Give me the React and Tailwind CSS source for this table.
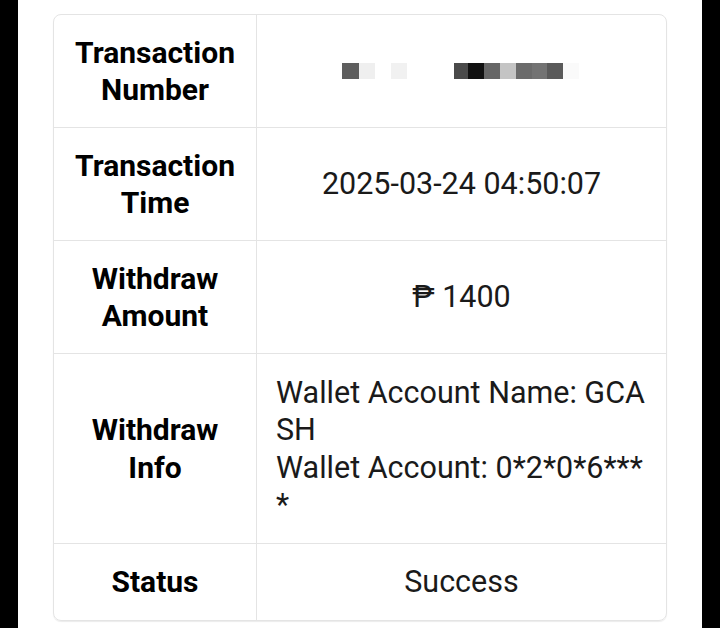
const mask = [
  { w: 17, c: "bg-[#5e5e5e]" },
  { w: 16, c: "bg-[#efefef]" },
  { w: 16, c: "bg-white" },
  { w: 16, c: "bg-[#f1f1f1]" },
  { w: 47, c: "bg-white" },
  { w: 14, c: "bg-[#4a4a4a]" },
  { w: 16, c: "bg-[#111111]" },
  { w: 16, c: "bg-[#666666]" },
  { w: 16, c: "bg-[#c4c4c4]" },
  { w: 16, c: "bg-[#6b6b6b]" },
  { w: 15, c: "bg-[#737373]" },
  { w: 16, c: "bg-[#5a5a5a]" },
  { w: 16, c: "bg-[#fafafa]" },
];

const Label = ({ children }) => (
  <div className="flex items-center justify-center border-r border-[#e4e4e4] px-2 py-[18.5px] text-center text-[30px] font-bold leading-[37.5px] text-black">
    <span>{children}</span>
  </div>
);

const Value = ({ children, className = "px-[16px] justify-center py-[18.5px]" }) => (
  <div className={`flex items-center text-[30.5px] leading-[37.5px] text-[#1a1a1a] ${className}`}>
    {children}
  </div>
);

export default function App() {
  return (
    <div className="flex h-[628px] w-full bg-black px-[18px] font-['Roboto','Noto_Sans',sans-serif]">
      <div className="flex-1 bg-white px-[35px] pt-[14px]">
        <div className="overflow-hidden rounded-lg border border-[#e4e4e4] shadow-[0_1px_1px_rgba(0,0,0,0.08)]">
          <div className="grid grid-cols-[203px_1fr] border-b border-[#e4e4e4]">
            <Label>Transaction<br />Number</Label>
            <Value>
              <div className="flex h-[16px] pr-[2px]">
                {mask.map((m, i) => (
                  <div key={i} className={`h-full ${m.c}`} style={{ width: m.w }} />
                ))}
              </div>
            </Value>
          </div>
          <div className="grid grid-cols-[203px_1fr] border-b border-[#e4e4e4]">
            <Label>Transaction<br />Time</Label>
            <Value>2025-03-24 04:50:07</Value>
          </div>
          <div className="grid grid-cols-[203px_1fr] border-b border-[#e4e4e4]">
            <Label>Withdraw<br />Amount</Label>
            <Value>₱ 1400</Value>
          </div>
          <div className="grid grid-cols-[203px_1fr] border-b border-[#e4e4e4]">
            <Label>Withdraw<br />Info</Label>
            <Value className="justify-start break-all py-[19.5px] pl-[19px] pr-[14px] text-left">
              <div>
                <div>Wallet Account Name: GCASH</div>
                <div>Wallet Account: 0*2*0*6****</div>
              </div>
            </Value>
          </div>
          <div className="grid grid-cols-[203px_1fr]">
            <Label>Status</Label>
            <Value className="justify-center px-[16px] py-[19px]">Success</Value>
          </div>
        </div>
      </div>
    </div>
  );
}
